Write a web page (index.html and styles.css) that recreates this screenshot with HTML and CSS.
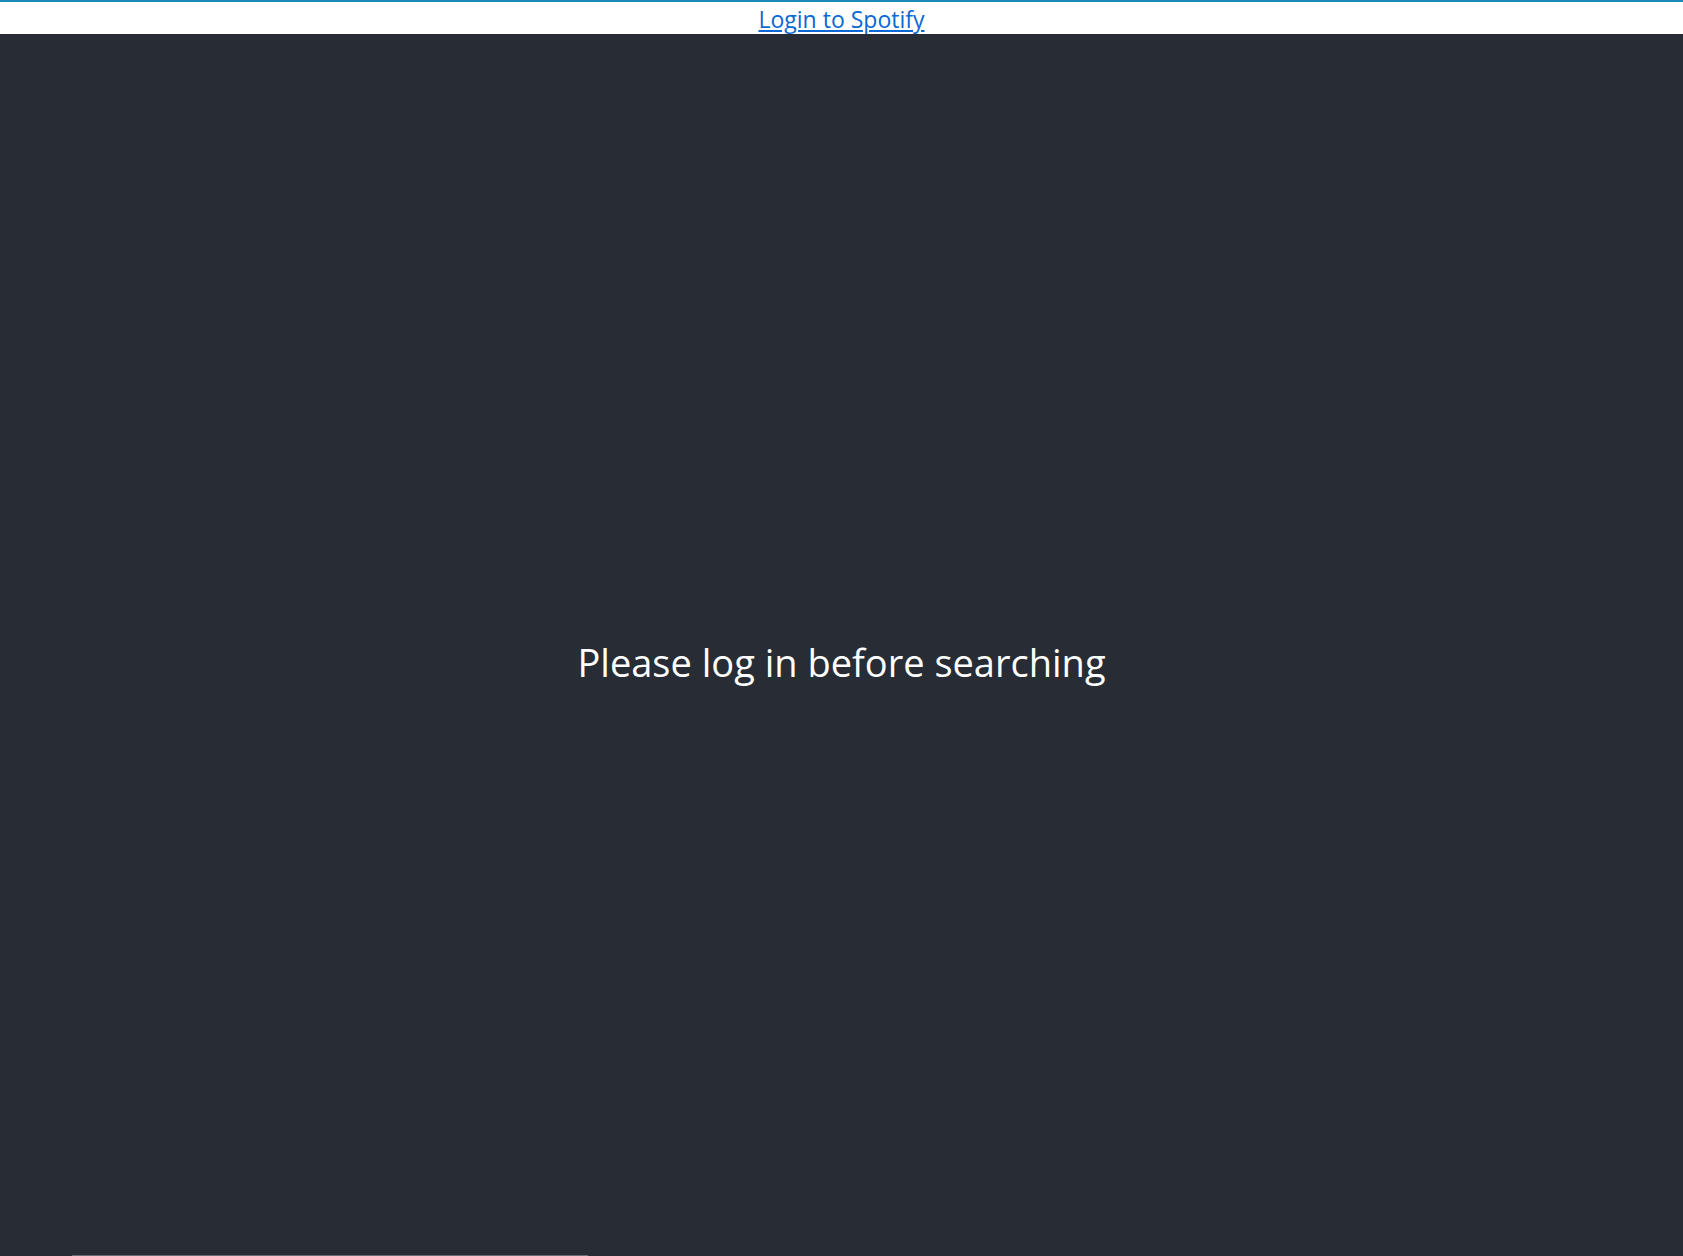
FILE: index.html
```html
<!DOCTYPE html>
<html>
<head>
<meta charset="utf-8">
<link rel="stylesheet" href="styles.css">
</head>
<body>
<div class="topbar"><a class="login" href="#">Login to Spotify</a></div>
<div class="app">
  <p class="message">Please log in before searching</p>
</div>
<div class="scrollthumb"></div>
</body>
</html>
```
FILE: styles.css
```css
html, body {
  margin: 0;
  padding: 0;
  overflow: hidden;
}
body {
  font-family: "Open Sans", "Noto Sans", sans-serif;
  background: #282c34;
}
.topbar {
  background: #ffffff;
  border-top: 2px solid #1a8bb9;
  height: 32px;
  display: flex;
  justify-content: center;
  align-items: flex-start;
}
.login {
  color: #0b68d4;
  font-size: 23px;
  line-height: 34px;
  text-decoration: underline;
}
.app {
  min-height: 100vh;
  background: #282c34;
  display: flex;
  align-items: center;
  justify-content: center;
  color: #ffffff;
}
.message {
  margin: 0;
  font-size: 38px;
}
.scrollthumb {
  position: fixed;
  left: 72px;
  bottom: 0;
  width: 516px;
  height: 1px;
  background: #6b6e73;
}
```
